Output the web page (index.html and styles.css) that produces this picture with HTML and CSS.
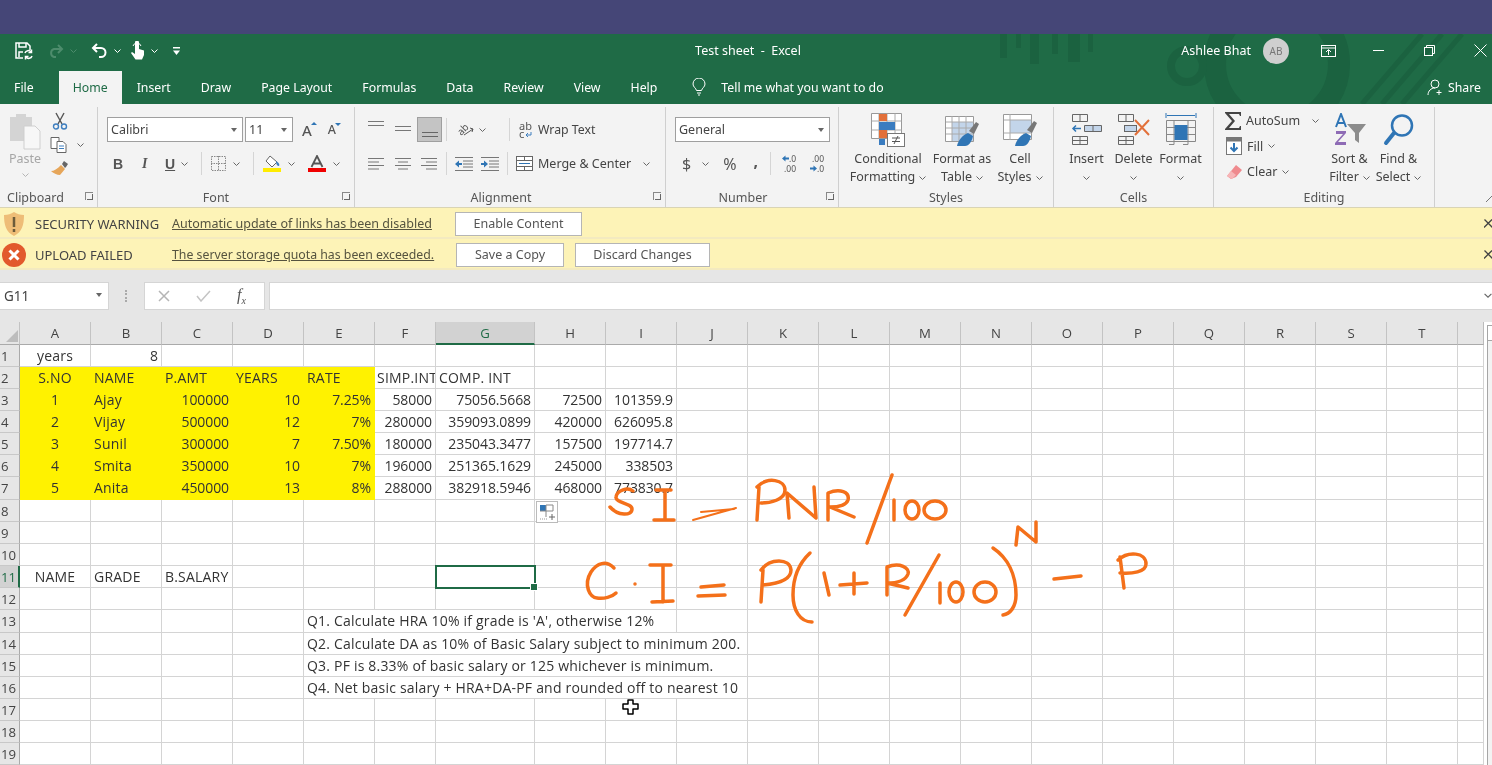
FILE: index.html
```html
<!DOCTYPE html>
<html lang="en">
<head>
    <meta charset="UTF-8">
    <meta name="viewport" content="width=device-width, initial-scale=1.0">
    <title>Test sheet - Excel</title>
    <link rel="stylesheet" href="styles.css">
</head>
<body>

<div class="screen-top"></div>

<div class="chrome">
    <svg class="chrome-art" width="560" height="70" viewBox="0 0 560 70">
        <g fill="#1b6240">
            <rect x="68" y="0" width="7" height="24"/><rect x="84" y="0" width="5" height="14"/>
            <rect x="98" y="0" width="9" height="30"/><rect x="120" y="0" width="6" height="20"/>
            <rect x="136" y="0" width="12" height="28"/><rect x="156" y="0" width="5" height="18"/>
        </g>
        <g fill="none" stroke="#1b6240">
            <circle cx="345" cy="30" r="62" stroke-width="22"/>
            <circle cx="255" cy="32" r="16" stroke-width="8"/>
            <path d="M490 0l-60 70M510 0l-60 70M530 0l-60 70" stroke-width="5"/>
        </g>
    </svg>
    <div class="title-row">
        <div class="qat">
            <svg class="qat-save" width="18" height="18" viewBox="0 0 18 18" fill="none" stroke="#fff" stroke-width="1.5"><path d="M8 16H1V1h11l3 3v4"/><path d="M4 1v4h7V1M4 15v-5h4"/><path d="M10 11a3.4 3.4 0 0 1 6-1M17 14a3.4 3.4 0 0 1-6 1"/><path d="M16.500 7.500v3h-3M10.500 17.500v-3h3"/></svg>
            <svg class="qat-redo" width="17" height="14" viewBox="0 0 17 14" fill="none" stroke="#4d8c6c" stroke-width="2"><path d="M15 5H7a4.200 4.200 0 0 0 0 8h2M11 1l4 4-4 4"/></svg>
            <svg class="chev chev-dim" width="7" height="4" viewBox="0 0 7 4"><path d="M.5.500l3 3 3-3"/></svg>
            <svg class="qat-undo" width="17" height="15" viewBox="0 0 17 15" fill="none" stroke="#fff" stroke-width="2"><path d="M2 5h8a4.200 4.200 0 0 1 0 9H8M6 1L2 5l4 4"/></svg>
            <svg class="chev chev-white" width="7" height="4" viewBox="0 0 7 4"><path d="M.5.500l3 3 3-3"/></svg>
            <svg class="qat-touch" width="15" height="19" viewBox="0 0 15 19" fill="#fff"><path d="M5 1.500a2 2 0 0 1 4 0V8l5 1.500V14l-2 4.500H5.500L1 12l1-1 3 2z"/><path d="M3 5a4.200 4.200 0 0 1 8 0" fill="none" stroke="#fff"/></svg>
            <svg class="chev chev-white" width="7" height="4" viewBox="0 0 7 4"><path d="M.5.500l3 3 3-3"/></svg>
            <svg class="qat-more" width="7" height="8" viewBox="0 0 7 8" fill="#fff"><rect width="7" height="1.500"/><path d="M0 3.500h7L3.500 8z"/></svg>
        </div>
        <div class="doc-title">Test sheet &nbsp;-&nbsp; Excel</div>
        <div class="account">
            <span class="user-name">Ashlee Bhat</span>
            <span class="avatar">AB</span>
            <svg class="win-display" width="15" height="12" viewBox="0 0 15 12" fill="none" stroke="#fff"><rect x=".5" y=".5" width="14" height="11"/><path d="M.5 3h14"/><path d="M7.500 10V5M5 7l2.500-2.500L10 7"/></svg>
            <svg class="win-min" width="11" height="2" viewBox="0 0 11 2"><rect width="11" height="1" fill="#fff"/></svg>
            <svg class="win-max" width="11" height="11" viewBox="0 0 11 11" fill="none" stroke="#fff"><rect x=".5" y="2.500" width="8" height="8"/><path d="M2.500 2.500v-2h8v8h-2"/></svg>
            <svg class="win-close" width="13" height="13" viewBox="0 0 13 13" stroke="#fff"><path d="M.5.500l12 12M12.500.500l-12 12"/></svg>
        </div>
    </div>
    <nav class="tabs">
        <span class="tab">File</span>
        <span class="tab tab-active">Home</span>
        <span class="tab">Insert</span>
        <span class="tab">Draw</span>
        <span class="tab">Page Layout</span>
        <span class="tab">Formulas</span>
        <span class="tab">Data</span>
        <span class="tab">Review</span>
        <span class="tab">View</span>
        <span class="tab">Help</span>
        <svg class="tell-icon" width="14" height="18" viewBox="0 0 14 18" fill="none" stroke="#fff"><path d="M4.500 12.500C4 10 1 9 1 6a6 6 0 0 1 12 0c0 3-3 4-3.500 6.500z"/><path d="M5 15h4M6 17h2"/></svg>
        <span class="tell-me">Tell me what you want to do</span>
        <span class="share">
            <svg width="17" height="17" viewBox="0 0 17 17" fill="none" stroke="#fff"><circle cx="8" cy="5" r="4"/><path d="M1 16c0-4 3-7 7-7M12 11v5M9.500 13.500h5"/></svg>
            Share
        </span>
    </nav>
</div>

<section class="ribbon">
    <div class="group group-clipboard">
        <div class="group-body clip-body">
            <div class="paste">
                <svg width="32" height="38" viewBox="0 0 32 38"><path d="M1 5h6V2h10v3h6v24H1z" fill="#d4d4d4"/><path d="M15 14h11l5 5v18H15z" fill="#f7f7f7" stroke="#cfcfcf"/></svg>
                <span class="paste-label">Paste</span>
                <svg class="chev chev-light" width="7" height="4" viewBox="0 0 7 4"><path d="M.5.500l3 3 3-3"/></svg>
            </div>
            <div class="clip-tools">
                <svg width="16" height="18" viewBox="0 0 16 18" fill="none"><path d="M4 1l6 11M12 1L6 12" stroke="#555" stroke-width="1.400"/><circle cx="4" cy="14.500" r="2.500" stroke="#3f7fbf" stroke-width="1.400"/><circle cx="12" cy="14.500" r="2.500" stroke="#3f7fbf" stroke-width="1.400"/></svg>
                <div class="clip-copy">
                    <svg width="18" height="16" viewBox="0 0 18 16" fill="#fff" stroke="#666"><path d="M1 .5h8v11H1z"/><path d="M7 4.500h6l3 3v8H7z"/><path d="M9 9h5M9 11.500h5" stroke="#3f7fbf"/></svg>
                    <svg class="chev" width="7" height="4" viewBox="0 0 7 4"><path d="M.5.500l3 3 3-3"/></svg>
                </div>
                <svg width="19" height="16" viewBox="0 0 19 16"><path d="M11 5l4 4-5 6c-3 0-7-2-9-4 3 0 6-2 10-6z" fill="#e6a65a"/><path d="M12 4l2-3 4 3-2 3-1 1z" fill="#666"/></svg>
            </div>
        </div>
        <div class="group-label">Clipboard<span class="launcher"></span></div>
    </div>

    <div class="group group-font">
        <div class="group-body">
            <div class="tool-row font-row-1">
                <span class="combo combo-font">Calibri<i class="combo-arrow"></i></span>
                <span class="combo combo-size">11<i class="combo-arrow"></i></span>
                <span class="grow-a">A<i class="tick-up"></i></span>
                <span class="shrink-a">A<i class="tick-down"></i></span>
            </div>
            <div class="tool-row font-row-2">
                <b class="fmt">B</b>
                <em class="fmt">I</em>
                <u class="fmt">U</u>
                <svg class="chev" width="7" height="4" viewBox="0 0 7 4"><path d="M.5.500l3 3 3-3"/></svg>
                <i class="sep"></i>
                <svg width="15" height="15" viewBox="0 0 15 15" fill="none" stroke="#888" stroke-dasharray="1.500 1"><rect x=".5" y=".5" width="14" height="14"/><path d="M7.500 0v15M0 7.500h15"/></svg>
                <svg class="chev" width="7" height="4" viewBox="0 0 7 4"><path d="M.5.500l3 3 3-3"/></svg>
                <i class="sep"></i>
                <svg width="18" height="17" viewBox="0 0 18 17"><path d="M7 1l7 6-5 5-6-6z" fill="#fff" stroke="#666"/><path d="M13 6c2 1 4 3 3 5-2 0-3-2-3-5z" fill="#3f7fbf"/><rect y="13" width="18" height="4" fill="#ffec00"/></svg>
                <svg class="chev" width="7" height="4" viewBox="0 0 7 4"><path d="M.5.500l3 3 3-3"/></svg>
                <svg class="font-color" width="18" height="17" viewBox="0 0 18 17"><path d="M3.500 12L9 1l5.500 11M5.500 8.500h7" fill="none" stroke="#555" stroke-width="1.800"/><rect y="13" width="18" height="4" fill="#f00000"/></svg>
                <svg class="chev" width="7" height="4" viewBox="0 0 7 4"><path d="M.5.500l3 3 3-3"/></svg>
            </div>
        </div>
        <div class="group-label">Font<span class="launcher"></span></div>
    </div>

    <div class="group group-align">
        <div class="group-body">
            <div class="tool-row align-row-1">
                <svg class="al al-top" width="16" height="8" viewBox="0 0 16 8" stroke="#777"><path d="M0 .5h16M0 4.500h16"/></svg>
                <svg class="al al-mid al-center" width="16" height="8" viewBox="0 0 16 8" stroke="#777"><path d="M0 1.500h16M0 5.500h16"/></svg>
                <span class="al-active"><svg width="16" height="8" viewBox="0 0 16 8" stroke="#666"><path d="M0 2.500h16M0 6.500h16"/></svg></span>
                <i class="sep"></i>
                <span class="orient">ab</span>
                <svg class="orient-arrow" width="10" height="9" viewBox="0 0 10 9" fill="none" stroke="#555"><path d="M0 8L9 2M6 1l3 1-1 3"/></svg>
                <svg class="chev" width="7" height="4" viewBox="0 0 7 4"><path d="M.5.500l3 3 3-3"/></svg>
                <i class="sep sep-wrap"></i>
                <span class="wrap-icon">ab<br>c<svg width="7" height="6" viewBox="0 0 7 6" fill="none" stroke="#3f7fbf"><path d="M6 0v3H1M3 1L1 3l2 2"/></svg></span>
                <span class="wrap-text">Wrap Text</span>
            </div>
            <div class="tool-row align-row-2">
                <svg class="al" width="16" height="12" viewBox="0 0 16 12" stroke="#777"><path d="M0 .5h16M0 4h11M0 7.500h16M0 11h11"/></svg>
                <svg class="al al-mid" width="16" height="12" viewBox="0 0 16 12" stroke="#777"><path d="M0 .5h16M3 4h10M0 7.500h16M3 11h10"/></svg>
                <svg class="al al-right" width="16" height="12" viewBox="0 0 16 12" stroke="#777"><path d="M0 .5h16M5 4h11M0 7.500h16M5 11h11"/></svg>
                <i class="sep sep-2"></i>
                <svg class="indent" width="18" height="14" viewBox="0 0 18 14"><path d="M0 .5h18M8 4h10M8 7h10M8 10h10M0 13.500h18" stroke="#777"/><path d="M0 7l4-3.500v2.500h3v2H4v2.500z" fill="#2f75b5"/></svg>
                <svg class="indent indent-2" width="18" height="14" viewBox="0 0 18 14"><path d="M0 .5h18M8 4h10M8 7h10M8 10h10M0 13.500h18" stroke="#777"/><path d="M7 7L3 3.500v2.500H0v2h3v2.500z" fill="#2f75b5"/></svg>
                <i class="sep sep-merge"></i>
                <svg class="merge-icon" width="17" height="15" viewBox="0 0 17 15" fill="#fff" stroke="#666"><rect x=".5" y=".5" width="16" height="14"/><path d="M.5 4.500h16M.5 10.500h16M8.500.5v4M8.500 10.500v4" /><path d="M3 7.500h11" stroke="#2f75b5"/></svg>
                <span class="merge-text">Merge &amp; Center</span>
                <svg class="chev" width="7" height="4" viewBox="0 0 7 4"><path d="M.5.500l3 3 3-3"/></svg>
            </div>
        </div>
        <div class="group-label">Alignment<span class="launcher"></span></div>
    </div>

    <div class="group group-number">
        <div class="group-body">
            <div class="tool-row number-row-1">
                <span class="combo combo-number">General<i class="combo-arrow"></i></span>
            </div>
            <div class="tool-row number-row-2">
                <span class="num-sym">$</span>
                <svg class="chev" width="7" height="4" viewBox="0 0 7 4"><path d="M.5.500l3 3 3-3"/></svg>
                <span class="num-sym num-pct">%</span>
                <span class="num-sym num-comma">,</span>
                <i class="sep"></i>
                <span class="dec">
                    <svg width="7" height="7" viewBox="0 0 7 7"><path d="M0 3.500L3.500.5v2H7v2H3.500v2z" fill="#2f75b5"/></svg>.0<br>.00
                </span>
                <span class="dec dec-2">
                    .00<br><svg width="7" height="7" viewBox="0 0 7 7"><path d="M7 3.500L3.500.5v2H0v2h3.500v2z" fill="#2f75b5"/></svg>.0
                </span>
            </div>
        </div>
        <div class="group-label">Number<span class="launcher"></span></div>
    </div>

    <div class="group group-styles">
        <div class="group-body big-row">
            <div class="big big-cond">
                <svg width="34" height="34" viewBox="0 0 34 34"><path d="M.5.500h30v25h-30z" fill="#fff" stroke="#999"/><path d="M8 .5v25M16 .5v25M24 .5v25M.5 8h30M.5 17h30" stroke="#aaa"/><rect x="8" y="1" width="8" height="7" fill="#e2703a"/><rect x="8" y="9" width="16" height="8" fill="#3a7cc0"/><rect x="8" y="17" width="8" height="8" fill="#e2703a"/><rect x="8" y="26" width="6" height="6" fill="#3a7cc0"/><rect x="16.500" y="20.500" width="17" height="13" fill="#fff" stroke="#777"/><path d="M21 25h8M21 28.500h8M27 23l-4 8" stroke="#555"/></svg>
                <span class="big-label">Conditional<br>Formatting<svg class="chev" width="7" height="4" viewBox="0 0 7 4"><path d="M.5.500l3 3 3-3"/></svg></span>
            </div>
            <div class="big big-table">
                <svg width="34" height="34" viewBox="0 0 34 34"><path d="M.5 3.500h28v25H.5z" fill="#fff" stroke="#999"/><rect x="7" y="9" width="21" height="19" fill="#c3d5ea"/><path d="M7 3v25M14 3v25M21 3v25M1 9h28M1 15h28M1 21h28" stroke="#aaa"/><path d="M24 18l7-9 3 2-5 10z" fill="#777"/><path d="M12 33c1-5 5-11 11-13l5 3c-1 5-4 10-8 10z" fill="#2f75b5"/></svg>
                <span class="big-label">Format as<br>Table<svg class="chev" width="7" height="4" viewBox="0 0 7 4"><path d="M.5.500l3 3 3-3"/></svg></span>
            </div>
            <div class="big big-cell">
                <svg width="34" height="34" viewBox="0 0 34 34"><path d="M.5 1.500h28v25H.5z" fill="#fff" stroke="#999"/><rect x="7" y="7" width="21" height="13" fill="#c3d5ea"/><path d="M7 1v26M21 20v7M1 7h28M1 20h28" stroke="#aaa"/><path d="M24 17l7-9 3 2-5 10z" fill="#777"/><path d="M12 33c1-5 5-11 11-13l5 3c-1 5-4 10-8 10z" fill="#2f75b5"/></svg>
                <span class="big-label">Cell<br>Styles<svg class="chev" width="7" height="4" viewBox="0 0 7 4"><path d="M.5.500l3 3 3-3"/></svg></span>
            </div>
        </div>
        <div class="group-label">Styles</div>
    </div>

    <div class="group group-cells">
        <div class="group-body big-row">
            <div class="big big-47">
                <svg width="32" height="34" viewBox="0 0 32 34" fill="none" stroke="#666"><path d="M1.500 1.500h15v7h-15zM9 1.500v7M1.500 23.500h15v8h-15zM1.500 27.500h15M9 23.500v8"/><path d="M13.500 12.500h17v6h-17zM22 12.500v6" fill="#c3d5ea"/><path d="M2 15.500h8M5 12.500l-3 3 3 3" stroke="#2f75b5" stroke-width="1.500"/></svg>
                <span class="big-label">Insert<br><svg class="chev" width="7" height="4" viewBox="0 0 7 4"><path d="M.5.500l3 3 3-3"/></svg></span>
            </div>
            <div class="big big-47">
                <svg width="34" height="34" viewBox="0 0 34 34" fill="none" stroke="#666"><path d="M1.500 1.500h15v7h-15zM9 1.500v7M1.500 23.500h15v8h-15zM1.500 27.500h15M9 23.500v8"/><rect x="7.500" y="12.500" width="12" height="6" fill="#c3d5ea"/><path d="M18 7l14 15M32 7L18 22" stroke="#e2703a" stroke-width="2"/></svg>
                <span class="big-label">Delete<br><svg class="chev" width="7" height="4" viewBox="0 0 7 4"><path d="M.5.500l3 3 3-3"/></svg></span>
            </div>
            <div class="big big-47">
                <svg width="32" height="34" viewBox="0 0 32 34" fill="none" stroke="#888"><path d="M1 5v-5M31 5v-5M2 2.500h28" stroke="#2f75b5"/><path d="M1.500 7.500h29v21h-29zM9 7.500v21M23 7.500v21M1.500 14.500h29M1.500 21.500h29"/><rect x="9.500" y="12" width="13" height="15" fill="#2f75b5" stroke="none"/><path d="M9 28.500v3H4M23 28.500v3h-5"/></svg>
                <span class="big-label">Format<br><svg class="chev" width="7" height="4" viewBox="0 0 7 4"><path d="M.5.500l3 3 3-3"/></svg></span>
            </div>
        </div>
        <div class="group-label">Cells</div>
    </div>

    <div class="group group-editing">
        <div class="group-body big-row">
            <div class="edit-stack">
                <div class="edit-row">
                    <svg class="sigma" width="17" height="18" viewBox="0 0 17 18"><path d="M0 0h16v4h-1l-1-2H4l6 7-6 7h10l1-2h1v4H0v-1l7-8-7-8z" fill="#444"/></svg>
                    <span class="edit-text">AutoSum</span>
                    <svg class="chev edit-chev-first" width="7" height="4" viewBox="0 0 7 4"><path d="M.5.500l3 3 3-3"/></svg>
                </div>
                <div class="edit-row">
                    <svg class="edit-icon" width="16" height="18" viewBox="0 0 16 18"><rect x=".5" y=".5" width="15" height="17" fill="#fff" stroke="#777"/><rect x=".5" y=".5" width="15" height="4" fill="#777"/><path d="M8 6v8M4.500 10.500L8 14l3.500-3.500" fill="none" stroke="#2f75b5" stroke-width="2"/></svg>
                    <span class="edit-text">Fill</span>
                    <svg class="chev" width="7" height="4" viewBox="0 0 7 4"><path d="M.5.500l3 3 3-3"/></svg>
                </div>
                <div class="edit-row">
                    <svg class="edit-icon" width="16" height="14" viewBox="0 0 16 14"><path d="M10 0l6 5-6 7-5 2-4-3z" fill="#ef8a8e"/><path d="M1 11l4-5 5 4-4 4z" fill="#f7b5b7"/></svg>
                    <span class="edit-text">Clear</span>
                    <svg class="chev" width="7" height="4" viewBox="0 0 7 4"><path d="M.5.500l3 3 3-3"/></svg>
                </div>
            </div>
            <div class="big big-49">
                <svg width="34" height="34" viewBox="0 0 34 34"><path d="M3 14L8 1l5 13M5 10h6" fill="none" stroke="#2f75b5" stroke-width="2"/><path d="M3 18h10v2L5 29h8v3H2v-2l8-9H3z" fill="#8e6bb5"/><path d="M14 11h19l-7 9v10l-4-3v-7z" fill="#8c8c8c"/></svg>
                <span class="big-label">Sort &amp;<br>Filter<svg class="chev" width="7" height="4" viewBox="0 0 7 4"><path d="M.5.500l3 3 3-3"/></svg></span>
            </div>
            <div class="big big-49">
                <svg width="32" height="34" viewBox="0 0 32 34" fill="none" stroke="#2f75b5"><circle cx="19" cy="12.500" r="10" stroke-width="2.500"/><path d="M11 20L3 30" stroke-width="4" stroke-linecap="round"/></svg>
                <span class="big-label">Find &amp;<br>Select<svg class="chev" width="7" height="4" viewBox="0 0 7 4"><path d="M.5.500l3 3 3-3"/></svg></span>
            </div>
        </div>
        <div class="group-label">Editing</div>
    </div>

    <svg class="ribbon-collapse" width="6" height="6" viewBox="0 0 6 6" stroke="#777"><path d="M0 6L6 0"/></svg>
</section>

<div class="msg-bar">
    <svg class="msg-icon" width="22" height="26" viewBox="0 0 22 26"><path d="M11 1c3 2 6 3 10 3 0 10-2 17-10 21C3 21 1 14 1 4c4 0 7-1 10-3z" fill="#eebd77"/><path d="M11 6v10M11 18v3" stroke="#6b5b3a" stroke-width="2.500"/></svg>
    <span class="msg-label">SECURITY WARNING</span>
    <span class="msg-link">Automatic update of links has been disabled</span>
    <span class="msg-btn msg-enable">Enable Content</span>
    <svg class="msg-close" width="8" height="9" viewBox="0 0 8 9" stroke="#444" stroke-width="1.300"><path d="M.5.500l8 8M8 .5l-8 8"/></svg>
</div>
<div class="msg-bar">
    <svg class="msg-icon" width="24" height="24" viewBox="0 0 24 24"><circle cx="12" cy="12" r="12" fill="#e2592c"/><path d="M7.500 7.500l9 9M16.500 7.500l-9 9" stroke="#fff" stroke-width="3"/></svg>
    <span class="msg-label">UPLOAD FAILED</span>
    <span class="msg-link msg-link-2">The server storage quota has been exceeded.</span>
    <span class="msg-btn msg-save">Save a Copy</span>
    <span class="msg-btn msg-discard">Discard Changes</span>
    <svg class="msg-close" width="8" height="9" viewBox="0 0 8 9" stroke="#444" stroke-width="1.300"><path d="M.5.500l8 8M8 .5l-8 8"/></svg>
</div>

<div class="formula-bar">
    <div class="name-box">G11<i class="combo-arrow"></i></div>
    <div class="grip"></div>
    <div class="fx-box">
        <svg width="12" height="12" viewBox="0 0 12 12" stroke="#b5b5b5" stroke-width="1.500"><path d="M1 1l10 10M11 1L1 11"/></svg>
        <svg width="15" height="12" viewBox="0 0 15 12" fill="none" stroke="#c4c4c4" stroke-width="1.500"><path d="M1 6l4 5L14 1"/></svg>
        <span class="fx">f<sub>x</sub></span>
    </div>
    <div class="formula-input"><svg class="chev formula-chev" width="8" height="5" viewBox="0 0 7 4"><path d="M.5.500l3 3 3-3"/></svg></div>
</div>

<div class="sheet-wrap">
    <div class="sheet">
        <div class="hd corner"></div><div class="hd">A</div><div class="hd">B</div><div class="hd">C</div><div class="hd">D</div><div class="hd">E</div><div class="hd">F</div><div class="hd hd-sel">G</div><div class="hd">H</div><div class="hd">I</div><div class="hd">J</div><div class="hd">K</div><div class="hd">L</div><div class="hd">M</div><div class="hd">N</div><div class="hd">O</div><div class="hd">P</div><div class="hd">Q</div><div class="hd">R</div><div class="hd">S</div><div class="hd">T</div><div class="hd hd-end"></div>

        <div class="rh">1</div><div class="c mid">years</div><div class="c num">8</div><div class="c"></div><div class="c"></div><div class="c"></div><div class="c"></div><div class="c"></div><div class="c"></div><div class="c"></div><div class="c"></div><div class="c"></div><div class="c"></div><div class="c"></div><div class="c"></div><div class="c"></div><div class="c"></div><div class="c"></div><div class="c"></div><div class="c"></div><div class="c"></div><div class="c"></div>

        <div class="rh">2</div><div class="c y mid">S.NO</div><div class="c y">NAME</div><div class="c y">P.AMT</div><div class="c y">YEARS</div><div class="c y">RATE</div><div class="c clip">SIMP.INT</div><div class="c">COMP. INT</div><div class="c"></div><div class="c"></div><div class="c"></div><div class="c"></div><div class="c"></div><div class="c"></div><div class="c"></div><div class="c"></div><div class="c"></div><div class="c"></div><div class="c"></div><div class="c"></div><div class="c"></div><div class="c"></div>

        <div class="rh">3</div><div class="c y mid">1</div><div class="c y">Ajay</div><div class="c y num">100000</div><div class="c y num">10</div><div class="c y num">7.25%</div><div class="c num">58000</div><div class="c num">75056.5668</div><div class="c num">72500</div><div class="c num">101359.9</div><div class="c"></div><div class="c"></div><div class="c"></div><div class="c"></div><div class="c"></div><div class="c"></div><div class="c"></div><div class="c"></div><div class="c"></div><div class="c"></div><div class="c"></div><div class="c"></div>

        <div class="rh">4</div><div class="c y mid">2</div><div class="c y">Vijay</div><div class="c y num">500000</div><div class="c y num">12</div><div class="c y num">7%</div><div class="c num">280000</div><div class="c num">359093.0899</div><div class="c num">420000</div><div class="c num">626095.8</div><div class="c"></div><div class="c"></div><div class="c"></div><div class="c"></div><div class="c"></div><div class="c"></div><div class="c"></div><div class="c"></div><div class="c"></div><div class="c"></div><div class="c"></div><div class="c"></div>

        <div class="rh">5</div><div class="c y mid">3</div><div class="c y">Sunil</div><div class="c y num">300000</div><div class="c y num">7</div><div class="c y num">7.50%</div><div class="c num">180000</div><div class="c num">235043.3477</div><div class="c num">157500</div><div class="c num">197714.7</div><div class="c"></div><div class="c"></div><div class="c"></div><div class="c"></div><div class="c"></div><div class="c"></div><div class="c"></div><div class="c"></div><div class="c"></div><div class="c"></div><div class="c"></div><div class="c"></div>

        <div class="rh">6</div><div class="c y mid">4</div><div class="c y">Smita</div><div class="c y num">350000</div><div class="c y num">10</div><div class="c y num">7%</div><div class="c num">196000</div><div class="c num">251365.1629</div><div class="c num">245000</div><div class="c num">338503</div><div class="c"></div><div class="c"></div><div class="c"></div><div class="c"></div><div class="c"></div><div class="c"></div><div class="c"></div><div class="c"></div><div class="c"></div><div class="c"></div><div class="c"></div><div class="c"></div>

        <div class="rh">7</div><div class="c y mid">5</div><div class="c y">Anita</div><div class="c y num">450000</div><div class="c y num">13</div><div class="c y num">8%</div><div class="c num">288000</div><div class="c num">382918.5946</div><div class="c num">468000</div><div class="c num">773830.7</div><div class="c"></div><div class="c"></div><div class="c"></div><div class="c"></div><div class="c"></div><div class="c"></div><div class="c"></div><div class="c"></div><div class="c"></div><div class="c"></div><div class="c"></div><div class="c"></div>

        <div class="rh">8</div><div class="c"></div><div class="c"></div><div class="c"></div><div class="c"></div><div class="c"></div><div class="c"></div><div class="c"></div><div class="c has-tag"><span class="paste-tag"><svg width="22" height="22" viewBox="0 0 22 22"><rect x=".5" y=".5" width="21" height="21" fill="#fff" stroke="#bbb"/><rect x="4" y="4" width="6" height="6" fill="#2f75b5"/><path d="M10 4h7v6h-7zM4 10h6v6" fill="none" stroke="#888"/><path d="M4 18h7" stroke="#999" stroke-dasharray="1 1"/><path d="M13 16h6M16 13v6" stroke="#666"/></svg></span></div><div class="c"></div><div class="c"></div><div class="c"></div><div class="c"></div><div class="c"></div><div class="c"></div><div class="c"></div><div class="c"></div><div class="c"></div><div class="c"></div><div class="c"></div><div class="c"></div><div class="c"></div>

        <div class="rh">9</div><div class="c"></div><div class="c"></div><div class="c"></div><div class="c"></div><div class="c"></div><div class="c"></div><div class="c"></div><div class="c"></div><div class="c"></div><div class="c"></div><div class="c"></div><div class="c"></div><div class="c"></div><div class="c"></div><div class="c"></div><div class="c"></div><div class="c"></div><div class="c"></div><div class="c"></div><div class="c"></div><div class="c"></div>

        <div class="rh">10</div><div class="c"></div><div class="c"></div><div class="c"></div><div class="c"></div><div class="c"></div><div class="c"></div><div class="c"></div><div class="c"></div><div class="c"></div><div class="c"></div><div class="c"></div><div class="c"></div><div class="c"></div><div class="c"></div><div class="c"></div><div class="c"></div><div class="c"></div><div class="c"></div><div class="c"></div><div class="c"></div><div class="c"></div>

        <div class="rh rh-sel">11</div><div class="c mid">NAME</div><div class="c">GRADE</div><div class="c">B.SALARY</div><div class="c"></div><div class="c"></div><div class="c"></div><div class="c selected"></div><div class="c"></div><div class="c"></div><div class="c"></div><div class="c"></div><div class="c"></div><div class="c"></div><div class="c"></div><div class="c"></div><div class="c"></div><div class="c"></div><div class="c"></div><div class="c"></div><div class="c"></div><div class="c"></div>

        <div class="rh">12</div><div class="c"></div><div class="c"></div><div class="c"></div><div class="c"></div><div class="c"></div><div class="c"></div><div class="c"></div><div class="c"></div><div class="c"></div><div class="c"></div><div class="c"></div><div class="c"></div><div class="c"></div><div class="c"></div><div class="c"></div><div class="c"></div><div class="c"></div><div class="c"></div><div class="c"></div><div class="c"></div><div class="c"></div>

        <div class="rh">13</div><div class="c"></div><div class="c"></div><div class="c"></div><div class="c"></div><div class="c span-5">Q1. Calculate HRA 10% if grade is 'A', otherwise 12%</div><div class="c"></div><div class="c"></div><div class="c"></div><div class="c"></div><div class="c"></div><div class="c"></div><div class="c"></div><div class="c"></div><div class="c"></div><div class="c"></div><div class="c"></div><div class="c"></div>

        <div class="rh">14</div><div class="c"></div><div class="c"></div><div class="c"></div><div class="c"></div><div class="c span-6">Q2. Calculate DA as 10% of Basic Salary subject to minimum 200.</div><div class="c"></div><div class="c"></div><div class="c"></div><div class="c"></div><div class="c"></div><div class="c"></div><div class="c"></div><div class="c"></div><div class="c"></div><div class="c"></div><div class="c"></div>

        <div class="rh">15</div><div class="c"></div><div class="c"></div><div class="c"></div><div class="c"></div><div class="c span-6">Q3. PF is 8.33% of basic salary or 125 whichever is minimum.</div><div class="c"></div><div class="c"></div><div class="c"></div><div class="c"></div><div class="c"></div><div class="c"></div><div class="c"></div><div class="c"></div><div class="c"></div><div class="c"></div><div class="c"></div>

        <div class="rh">16</div><div class="c"></div><div class="c"></div><div class="c"></div><div class="c"></div><div class="c span-6">Q4. Net basic salary + HRA+DA-PF and rounded off to nearest 10</div><div class="c"></div><div class="c"></div><div class="c"></div><div class="c"></div><div class="c"></div><div class="c"></div><div class="c"></div><div class="c"></div><div class="c"></div><div class="c"></div><div class="c"></div>

        <div class="rh">17</div><div class="c"></div><div class="c"></div><div class="c"></div><div class="c"></div><div class="c"></div><div class="c"></div><div class="c"></div><div class="c"></div><div class="c"></div><div class="c"></div><div class="c"></div><div class="c"></div><div class="c"></div><div class="c"></div><div class="c"></div><div class="c"></div><div class="c"></div><div class="c"></div><div class="c"></div><div class="c"></div><div class="c"></div>

        <div class="rh">18</div><div class="c"></div><div class="c"></div><div class="c"></div><div class="c"></div><div class="c"></div><div class="c"></div><div class="c"></div><div class="c"></div><div class="c"></div><div class="c"></div><div class="c"></div><div class="c"></div><div class="c"></div><div class="c"></div><div class="c"></div><div class="c"></div><div class="c"></div><div class="c"></div><div class="c"></div><div class="c"></div><div class="c"></div>

        <div class="rh">19</div><div class="c"></div><div class="c"></div><div class="c"></div><div class="c"></div><div class="c"></div><div class="c"></div><div class="c"></div><div class="c"></div><div class="c"></div><div class="c"></div><div class="c"></div><div class="c"></div><div class="c"></div><div class="c"></div><div class="c"></div><div class="c"></div><div class="c"></div><div class="c"></div><div class="c"></div><div class="c"></div><div class="c"></div>
    </div>
    <div class="v-scroll"><div class="v-scroll-btn"></div></div>
</div>

<!-- pen annotations drawn over the sheet -->
<svg class="ink" width="1492" height="765" viewBox="0 0 1492 765" fill="none" stroke="#f4701a" stroke-width="3.500" stroke-linecap="round" stroke-linejoin="round">
    <path d="M633 491C628 487 617 490 616 497C615 503 632 503 632 509C632 516 618 516 610 507"/>
    <path d="M656 490H671M665 490V520M654 520H674"/>
    <path d="M693 520L736 508M701 512L734 509" stroke-width="2"/>
    <path d="M759 487L757 520M757 487C768 476 785 480 785 490C785 500 770 503 761 503"/>
    <path d="M789 518L787 493L816 518L814 487"/>
    <path d="M828 520V493C840 488 850 492 848 500C846 506 836 507 830 507L854 517"/>
    <path d="M892 475L867 543"/>
    <path d="M894 500V520"/>
    <ellipse cx="912" cy="510" rx="7" ry="9"/>
    <ellipse cx="935" cy="510" rx="11" ry="9"/>
    <path d="M1016 545L1018 527L1036 542L1036 522"/>
    <path d="M614 568C606 560 597 563 591 572C583 585 590 598 597 598C604 599 612 597 616 593"/>
    <circle cx="635" cy="584" r="1" stroke-width="1.500"/>
    <path d="M650 565H671M663 565V602M652 602L673 601"/>
    <path d="M701 587L724 585M698 596L725 595"/>
    <path d="M763 570L761 602M761 570C770 558 790 558 791 570C791 581 775 584 763 585"/>
    <path d="M810 553C797 565 793 580 793 595C793 610 800 622 812 622"/>
    <path d="M824 573L829 595"/>
    <path d="M840 585L867 583M854 573V594"/>
    <path d="M887 595V567C900 562 910 568 908 574C905 582 895 583 887 583L908 588"/>
    <path d="M939 555L905 615"/>
    <path d="M940 583V603"/>
    <ellipse cx="956" cy="592" rx="7" ry="10"/>
    <ellipse cx="985" cy="592" rx="11" ry="10"/>
    <path d="M993 548C1008 558 1016 575 1016 595C1016 607 1010 614 1003 615"/>
    <path d="M1054 579L1081 576"/>
    <path d="M1120 557L1124 588M1118 560C1128 551 1146 552 1146 564C1146 572 1132 574 1120 573"/>
    <path class="cursor" d="M628 700h5v4h5v5h-5v5h-5v-5h-5v-5h5z" fill="#fff" stroke="#000" stroke-width="1.500" stroke-linecap="butt"/>
</svg>

</body>
</html>
```

FILE: styles.css
```css
* {
    box-sizing: border-box;
}
html, body {
    margin: 0;
    height: 765px;
    overflow: hidden;
}
body {
    position: relative;
    background-color: #fff;
    font-family: "Noto Sans", sans-serif;
    font-size: 12.5px;
    color: #444;
    filter: blur(0.35px); /* reference is a soft video capture */
}
svg {
    display: block;
    flex: none;
}
i {
    font-style: normal;
}

.screen-top {
    height: 34px;
    background-color: #454677;
}

/* title bar and tabs */
.chrome {
    position: relative;
    height: 70px;
    background-color: #1f6b46;
    color: #fff;
}
.chrome-art {
    position: absolute;
    left: 932px;
    top: 0;
}
.title-row {
    position: relative;
    display: grid;
    grid-template-columns: 1fr auto 1fr;
    align-items: center;
    height: 33px;
    margin-bottom: 4px;
}
.qat {
    display: flex;
    align-items: center;
    padding-left: 15px;
}
.qat-redo { margin-left: 14px; }
.chev-dim { margin-left: 6px; }
.qat-undo { margin-left: 14px; }
.qat .chev-white { margin-left: 6px; }
.qat-touch { margin-left: 9px; }
.qat-more { margin-left: 15px; }
.chev {
    fill: none;
    stroke: #666;
}
.chev-white { stroke: #fff; }
.chev-dim { stroke: #4d8c6c; }
.chev-light { stroke: #b5b5b5; }

.doc-title {
    font-size: 12.5px;
    padding-left: 4px;
}
.account {
    display: flex;
    align-items: center;
    justify-content: flex-end;
}
.user-name { font-size: 12.5px; }
.avatar {
    width: 26px;
    height: 26px;
    margin-left: 12px;
    border-radius: 50%;
    background-color: #cfcfcf;
    color: #777;
    font-size: 10px;
    line-height: 26px;
    text-align: center;
}
.win-display { margin-left: 32px; }
.win-min { margin-left: 37px; }
.win-max { margin-left: 40px; }
.win-close { margin-left: 39px; margin-right: 5px; }

.tabs {
    position: relative;
    display: flex;
    align-items: stretch;
    height: 33px;
    font-size: 12.3px;
}
.tab {
    padding: 0 15px;
    line-height: 33px;
}
.tab:first-child { padding-left: 14px; padding-right: 25px; }
.tab-active {
    background-color: #f3f3f3;
    color: #1f6b46;
    padding-right: 14px;
    padding-left: 14px;
}
.tell-icon { margin: 7px 0 0 20px; }
.tell-me { margin-left: 15px; line-height: 33px; }
.share {
    display: flex;
    align-items: center;
    gap: 4px;
    margin-left: auto;
    padding-right: 11px;
}

/* ribbon */
.ribbon {
    display: flex;
    height: 104px;
    background-color: #f3f3f3;
    border-bottom: 1px solid #d9d4b4;
}
.group {
    position: relative;
    display: flex;
    flex-direction: column;
    height: 100px;
    margin-top: 3px;
    border-right: 1px solid #cfcfcf;
}
.group-body {
    flex: 1;
}
.group-label {
    position: relative;
    height: 21px;
    padding-top: 2px;
    line-height: 19px;
    text-align: center;
    color: #555;
}
.launcher {
    position: absolute;
    right: 4px;
    top: 6px;
    width: 8px;
    height: 8px;
    border-left: 1px solid #888;
    border-top: 1px solid #888;
}
.launcher::after {
    content: "";
    position: absolute;
    right: 0;
    bottom: 0;
    width: 5px;
    height: 5px;
    border-right: 1px solid #666;
    border-bottom: 1px solid #666;
}
.group-clipboard { width: 98px; }
.group-font { width: 257px; }
.group-align { width: 311px; }
.group-number { width: 173px; }
.group-styles { width: 215px; }
.group-cells { width: 160px; }
.group-editing { width: 221px; }

.group-clipboard .group-label {
    text-align: left;
    padding-left: 7px;
}
.group-font .group-label { padding-right: 20px; }
.group-align .group-label { padding-right: 18px; }
.group-number .group-label { padding-right: 18px; }

.ribbon-collapse {
    align-self: flex-end;
    margin: 0 0 5px auto;
}

.tool-row {
    display: flex;
    align-items: center;
}
.sep {
    display: block;
    width: 1px;
    height: 23px;
    background-color: #d5d5d5;
}
.combo {
    position: relative;
    display: block;
    height: 25px;
    background-color: #fff;
    border: 1px solid #9f9f9f;
    line-height: 23px;
    padding-left: 3px;
    font-size: 12.5px;
}
.combo-arrow {
    position: absolute;
    right: 5px;
    top: 10px;
    border: 3px solid transparent;
    border-top: 4px solid #666;
    border-bottom: 0;
}

/* clipboard */
.clip-body {
    display: flex;
    padding: 5px 0 0 9px;
}
.paste {
    display: flex;
    flex-direction: column;
    align-items: center;
    width: 32px;
}
.paste-label {
    margin-top: -1px;
    line-height: 19px;
    color: #a6a6a6;
}
.paste .chev { margin-top: 5px; }
.clip-tools {
    display: flex;
    flex-direction: column;
    align-items: flex-start;
    margin: 0 0 0 9px;
    gap: 7px;
}
.clip-tools > svg:first-child { margin-left: 2px; }
.clip-copy {
    display: flex;
    align-items: center;
    gap: 9px;
}

/* font */
.font-row-1 {
    padding: 10px 0 0 9px;
}
.combo-font { width: 136px; }
.combo-size { width: 48px; margin-left: 2px; }
.grow-a, .shrink-a {
    position: relative;
    font-size: 15px;
    color: #555;
    font-weight: 500;
}
.grow-a { margin-left: 9px; }
.shrink-a { margin-left: 16px; font-size: 12.5px; }
.tick-up, .tick-down {
    position: absolute;
    right: -5px;
    top: 2px;
    border: 3px solid transparent;
}
.tick-up { border-bottom: 3px solid #2f75b5; border-top: 0; }
.tick-down { border-top: 3px solid #2f75b5; border-bottom: 0; }
.font-row-2 {
    height: 25px;
    margin-top: 9px;
    padding-left: 15px;
}
.fmt {
    width: 26px;
    font-size: 14px;
    font-style: normal;
    color: #555;
    font-family: "Liberation Sans", sans-serif;
}
.font-row-2 b { font-weight: 700; }
.font-row-2 em { font-style: italic; font-family: "Liberation Serif", serif; font-weight: 700; padding-left: 3px; }
.font-row-2 u { width: 16px; font-weight: 700; }
.font-row-2 .chev { margin-left: 0; }
.font-row-2 .sep { margin: 0 9px 0 13px; }
.font-row-2 svg + .chev { margin-left: 7px; }
.font-row-2 .font-color { margin-left: 13px; }

/* alignment */
.align-row-1 {
    padding: 10px 0 0 13px;
    height: 35px;
}
.al-mid { margin-left: 11px; }
.al-right { margin-left: 10px; }
.al-top { margin-top: -9px; }
.al-center { margin-top: -2px; }
.al-active {
    display: flex;
    align-items: flex-end;
    justify-content: center;
    width: 25px;
    height: 25px;
    padding-bottom: 3px;
    margin-left: 6px;
    background-color: #c4c4c4;
    border: 1px solid #9f9f9f;
}
.align-row-1 .sep { margin: 0 10px 0 4px; }
.orient {
    display: block;
    width: 9px;
    font-size: 10px;
    line-height: 10px;
    color: #555;
    transform: rotate(-45deg);
}
.orient-arrow { margin-left: -2px; margin-top: 4px; }
.align-row-1 .chev { margin-left: 5px; }
.align-row-1 .sep-wrap { margin: 0 9px 0 23px; }
.wrap-icon {
    width: 14px;
    font-size: 11px;
    line-height: 8px;
    color: #555;
}
.wrap-icon svg { display: inline; margin-left: 1px; }
.wrap-text { margin-left: 5px; font-size: 12.3px; }
.align-row-2 {
    height: 25px;
    margin-top: 9px;
    padding-left: 13px;
}
.align-row-2 .sep-2 { margin: 0 8px 0 9px; }
.indent-2 { margin-left: 8px; }
.sep-merge { margin: 0 8px 0 8px; }
.merge-icon { margin-left: 0; }
.merge-text { margin-left: 5px; }
.align-row-2 .chev { margin-left: 12px; }

/* number */
.number-row-1 { padding: 10px 0 0 9px; }
.combo-number { width: 155px; }
.number-row-2 {
    height: 25px;
    margin-top: 9px;
    padding-left: 16px;
}
.num-sym { font-size: 16px; color: #555; }
.number-row-2 .chev { margin-left: 11px; }
.num-pct { margin-left: 14px; }
.num-comma { margin-left: 17px; font-weight: 700; position: relative; top: -3px; }
.number-row-2 .sep { margin: 0 0 0 12px; }
.dec {
    display: block;
    width: 18px;
    margin-left: 7px;
    font-size: 8.5px;
    line-height: 10px;
    text-align: right;
    color: #555;
}
.dec svg { display: inline; }
.dec-2 { margin-left: 10px; }

/* big buttons */
.big-row {
    display: flex;
}
.big {
    display: flex;
    flex-direction: column;
    align-items: center;
    padding-top: 6px;
}
.big-label {
    display: block;
    margin-top: 3px;
    line-height: 18px;
    text-align: center;
    white-space: nowrap;
}
.big-label .chev {
    display: inline-block;
    margin-left: 4px;
    vertical-align: middle;
}
.big-47 { width: 47px; }
.big-49 { width: 49px; }
.group-styles .big-row { padding-left: 12px; }
.big-cond { width: 74px; }
.big-table { width: 70px; margin-left: 2px; }
.big-cell { width: 44px; margin-left: 1px; }
.group-cells .big-row { padding-left: 9px; }
.group-cells .big-label .chev { margin-left: 0; }
.group-editing .big-row { padding-left: 11px; }

.edit-stack {
    display: flex;
    flex-direction: column;
    width: 100px;
    padding-top: 1px;
}
.edit-row {
    display: flex;
    align-items: center;
    height: 25.5px;
}
.sigma { margin-right: 3px; }
.edit-icon { margin: 0 4px 0 1px; }
.edit-text { margin-left: 1px; }
.edit-row .chev { margin-left: 5px; }
.edit-row .edit-chev-first { margin-left: 12px; }

/* message bars */
.msg-bar {
    display: flex;
    align-items: center;
    height: 31px;
    padding-top: 2px;
    background-color: #fdf3b7;
    border-bottom: 2px solid #f3eac0;
    font-size: 12.5px;
    color: #555;
}
.msg-icon {
    margin-left: 2px;
    width: 24px;
}
.msg-label {
    width: 137px;
    margin-left: 9px;
    font-size: 13px;
    color: #444;
}
.msg-link {
    width: 283px;
    text-decoration: underline;
    color: #55533f;
}
.msg-link-2 { width: 284px; font-size: 12.3px; }
.msg-btn {
    height: 24px;
    background-color: #fff;
    border: 1px solid #b5b5b5;
    line-height: 22px;
    text-align: center;
}
.msg-enable { width: 127px; }
.msg-save { width: 108px; }
.msg-discard { width: 135px; margin-left: 11px; }
.msg-close {
    margin-left: auto;
}

/* formula bar */
.formula-bar {
    display: flex;
    align-items: center;
    height: 52px;
    background-color: #e6e6e6;
}
.name-box {
    position: relative;
    width: 109px;
    height: 28px;
    background-color: #fff;
    border: 1px solid #d5d5d5;
    border-left: 0;
    padding-left: 4px;
    font-size: 13.5px;
    line-height: 26px;
}
.name-box .combo-arrow { right: 6px; top: 10px; }
.grip {
    width: 2px;
    height: 12px;
    margin: 0 17px 0 16px;
    border-left: 2px dotted #aaa;
}
.fx-box {
    display: flex;
    align-items: center;
    width: 121px;
    height: 28px;
    padding-left: 13px;
    background-color: #fff;
    border: 1px solid #d5d5d5;
}
.fx-box svg + svg { margin-left: 26px; }
.fx {
    margin-left: 26px;
    font-family: "Liberation Serif", serif;
    font-style: italic;
    font-size: 16px;
    color: #555;
}
.fx sub { font-size: 10px; }
.formula-input {
    position: relative;
    flex: 1;
    height: 28px;
    margin-left: 4px;
    background-color: #fff;
    border: 1px solid #d5d5d5;
    border-right: 0;
}
.formula-chev {
    position: absolute;
    right: 0;
    top: 10px;
}

/* worksheet */
.sheet-wrap {
    display: flex;
    background-color: #fff;
}
.sheet {
    display: grid;
    grid-template-columns: 20px repeat(5, 71px) 61px 99px repeat(13, 71px) 26px;
    grid-template-rows: 22.5px;
    grid-auto-rows: 22.17px;
    font-family: "Open Sans", sans-serif;
    font-size: 13.2px;
    color: #333;
}
.hd {
    background-color: #e6e6e6;
    border-right: 1px solid #c3c3c3;
    border-bottom: 1px solid #aaa;
    line-height: 22px;
    text-align: center;
    color: #444;
}
.hd-sel {
    background-color: #d2d2d2;
    border-bottom: 2px solid #1f6b46;
    color: #1f6b46;
}
.hd-end {
    background-color: #e6e6e6;
    border-right: 1px solid #bbb;
}
.corner {
    position: relative;
}
.corner::after {
    content: "";
    position: absolute;
    right: 1px;
    bottom: 2px;
    border: 6px solid transparent;
    border-right-color: #bdbdbd;
    border-bottom-color: #bdbdbd;
}
.rh {
    background-color: #e6e6e6;
    border-right: 1px solid #aaa;
    border-bottom: 1px solid #c8c8c8;
    padding-left: 1px;
    line-height: 22px;
    color: #444;
    overflow: hidden;
}
.rh-sel {
    background-color: #d2d2d2;
    border-right: 2px solid #1f6b46;
    color: #1f6b46;
}
.c {
    border-right: 1px solid #d4d4d4;
    border-bottom: 1px solid #d4d4d4;
    padding: 0 3px;
    font-size: 14px;
    letter-spacing: 0.2px;
    line-height: 21.5px;
    white-space: nowrap;
}
.y {
    background-color: #fff200;
    border-color: #fff200;
}
.mid { text-align: center; }
.num { text-align: right; letter-spacing: -0.1px; }
.clip { padding: 0 0 0 2px; overflow: hidden; }
.span-5 { grid-column: span 5; }
.span-6 { grid-column: span 6; }
.selected {
    position: relative;
    outline: 2px solid #1f6b46;
    outline-offset: -1px;
}
.selected::after {
    content: "";
    position: absolute;
    right: -4px;
    bottom: -4px;
    width: 6px;
    height: 6px;
    background-color: #1f6b46;
    border: 1px solid #fff;
}
.has-tag { position: relative; }
.paste-tag {
    position: absolute;
    left: 1px;
    top: 1px;
}
.v-scroll {
    width: 5px;
    margin: 3px 0 0 3px;
    border-left: 1px solid #a6a6a6;
    background-color: #f3f3f3;
}
.v-scroll-btn {
    height: 16px;
    background-color: #fff;
    border-top: 1px solid #a6a6a6;
    border-bottom: 1px solid #a6a6a6;
}

/* pen strokes and mouse cursor */
.ink {
    position: absolute;
    left: 0;
    top: 0;
    pointer-events: none;
}
```
